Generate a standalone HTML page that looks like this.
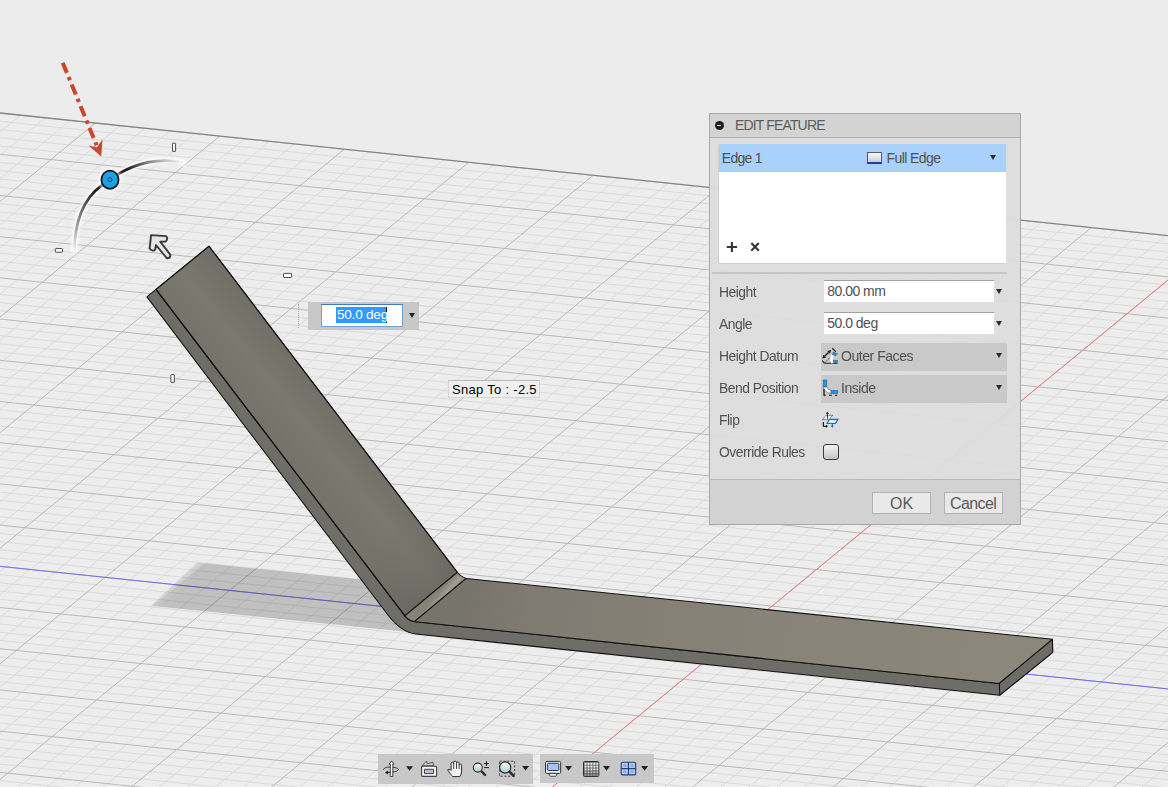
<!DOCTYPE html>
<html><head><meta charset="utf-8">
<style>
html,body{margin:0;padding:0;width:1168px;height:787px;overflow:hidden;background:#ececec;font-family:"Liberation Sans",sans-serif;}
#scene{position:absolute;left:0;top:0;}
.dlg{position:absolute;left:709px;top:113px;width:312px;height:412px;box-sizing:border-box;border:1px solid #a9a9a9;background:rgba(221,221,221,0.94);overflow:hidden;}
.dlg div{position:absolute;}
.t{line-height:20px;white-space:nowrap;font-size:13.5px;color:#505050;letter-spacing:-0.3px;}
.lb{font-size:14.3px;letter-spacing:-0.5px;transform:scaleX(0.97);transform-origin:0 0;}
.ttl{left:0;top:0;width:310px;height:23px;background:#d3d3d3;border-bottom:1px solid #b3b3b3;}
.list{left:9px;top:30px;width:287px;height:119px;background:#fff;box-shadow:-1px 1px 0 #cfcfcf;}
.hl{left:0;top:0;width:287px;height:28px;background:#aad0fc;}
.inp{left:114px;width:170px;height:21px;background:#fff;border-top:1px solid #a2a2a2;box-sizing:border-box;}
.sel{left:111px;width:186px;height:28px;background:#c9c9c9;}
.arr{width:0;height:0;border-left:3.7px solid transparent;border-right:3.7px solid transparent;border-top:5.3px solid #2a2a2a;}
.btn{top:378px;height:22px;background:#e9e9e9;border:1px solid #b3b3b3;box-sizing:border-box;}
.foot{left:0;top:365px;width:310px;height:47px;background:#d2d2d2;border-top:1px solid #b8b8b8;}
</style></head><body>
<svg id="scene" width="1168" height="787" viewBox="0 0 1168 787">
<defs>
<clipPath id="gclip"><polygon points="0,113 1168,235.6 1168,787 0,787"/></clipPath>
<filter id="blur3" x="-20%" y="-20%" width="140%" height="140%"><feGaussianBlur stdDeviation="3"/></filter>
<linearGradient id="bendg" x1="457" y1="572" x2="466" y2="580" gradientUnits="userSpaceOnUse">
<stop offset="0" stop-color="#858276"/><stop offset="0.5" stop-color="#a29e91"/><stop offset="1" stop-color="#8a867a"/></linearGradient>
<linearGradient id="shg" x1="169.5" y1="579" x2="179" y2="589.6" gradientUnits="userSpaceOnUse"><stop offset="0" stop-color="#000" stop-opacity="0"/><stop offset="1" stop-color="#000" stop-opacity="0.19"/></linearGradient>
<clipPath id="shclip"><polygon points="100,600.4 300,621 470,638.3 470,591 300,573.3 100,552.2"/></clipPath>
<linearGradient id="hfg" x1="466" y1="600" x2="1000" y2="656" gradientUnits="userSpaceOnUse"><stop offset="0" stop-color="#77746b"/><stop offset="0.12" stop-color="#7f7b72"/><stop offset="0.45" stop-color="#868277"/><stop offset="1" stop-color="#8b877b"/></linearGradient>
<linearGradient id="vfg" x1="431" y1="594" x2="383" y2="536" gradientUnits="userSpaceOnUse"><stop offset="0" stop-color="#000" stop-opacity="0.09"/><stop offset="0.5" stop-color="#000" stop-opacity="0.035"/><stop offset="1" stop-color="#000" stop-opacity="0"/></linearGradient>
<linearGradient id="vfg2" x1="156" y1="289.4" x2="209" y2="246.2" gradientUnits="userSpaceOnUse"><stop offset="0" stop-color="#76736b"/><stop offset="0.45" stop-color="#7b786f"/><stop offset="1" stop-color="#716e67"/></linearGradient>
</defs>
<g clip-path="url(#gclip)">
<rect x="0" y="0" width="1168" height="787" fill="#ededed"/>
<!-- shadow -->
<g transform="matrix(124.5 13.07 -44.38 36.55 727.6 642.7)" fill="none">
<path d="M-11.8 -11V7M-11.6 -11V7M-11.4 -11V7M-11.2 -11V7M-10.8 -11V7M-10.6 -11V7M-10.4 -11V7M-10.2 -11V7M-9.8 -11V7M-9.6 -11V7M-9.4 -11V7M-9.2 -11V7M-8.8 -11V7M-8.6 -11V7M-8.4 -11V7M-8.2 -11V7M-7.8 -11V7M-7.6 -11V7M-7.4 -11V7M-7.2 -11V7M-6.8 -11V7M-6.6 -11V7M-6.4 -11V7M-6.2 -11V7M-5.8 -11V7M-5.6 -11V7M-5.4 -11V7M-5.2 -11V7M-4.8 -11V7M-4.6 -11V7M-4.4 -11V7M-4.2 -11V7M-3.8 -11V7M-3.6 -11V7M-3.4 -11V7M-3.2 -11V7M-2.8 -11V7M-2.6 -11V7M-2.4 -11V7M-2.2 -11V7M-1.8 -11V7M-1.6 -11V7M-1.4 -11V7M-1.2 -11V7M-0.8 -11V7M-0.6 -11V7M-0.4 -11V7M-0.2 -11V7M0.2 -11V7M0.4 -11V7M0.6 -11V7M0.8 -11V7M1.2 -11V7M1.4 -11V7M1.6 -11V7M1.8 -11V7M2.2 -11V7M2.4 -11V7M2.6 -11V7M2.8 -11V7M3.2 -11V7M3.4 -11V7M3.6 -11V7M3.8 -11V7M4.2 -11V7M4.4 -11V7M4.6 -11V7M4.8 -11V7M5.2 -11V7M5.4 -11V7M5.6 -11V7M5.8 -11V7M-12 -10.8H6M-12 -10.6H6M-12 -10.4H6M-12 -10.2H6M-12 -9.8H6M-12 -9.6H6M-12 -9.4H6M-12 -9.2H6M-12 -8.8H6M-12 -8.6H6M-12 -8.4H6M-12 -8.2H6M-12 -7.8H6M-12 -7.6H6M-12 -7.4H6M-12 -7.2H6M-12 -6.8H6M-12 -6.6H6M-12 -6.4H6M-12 -6.2H6M-12 -5.8H6M-12 -5.6H6M-12 -5.4H6M-12 -5.2H6M-12 -4.8H6M-12 -4.6H6M-12 -4.4H6M-12 -4.2H6M-12 -3.8H6M-12 -3.6H6M-12 -3.4H6M-12 -3.2H6M-12 -2.8H6M-12 -2.6H6M-12 -2.4H6M-12 -2.2H6M-12 -1.8H6M-12 -1.6H6M-12 -1.4H6M-12 -1.2H6M-12 -0.8H6M-12 -0.6H6M-12 -0.4H6M-12 -0.2H6M-12 0.2H6M-12 0.4H6M-12 0.6H6M-12 0.8H6M-12 1.2H6M-12 1.4H6M-12 1.6H6M-12 1.8H6M-12 2.2H6M-12 2.4H6M-12 2.6H6M-12 2.8H6M-12 3.2H6M-12 3.4H6M-12 3.6H6M-12 3.8H6M-12 4.2H6M-12 4.4H6M-12 4.6H6M-12 4.8H6M-12 5.2H6M-12 5.4H6M-12 5.6H6M-12 5.8H6M-12 6.2H6M-12 6.4H6M-12 6.6H6M-12 6.8H6" stroke="#dbdbdb" stroke-width="1" vector-effect="non-scaling-stroke"/>
<path d="M-12 -11V7M-11 -11V7M-10 -11V7M-9 -11V7M-8 -11V7M-7 -11V7M-6 -11V7M-5 -11V7M-4 -11V7M-3 -11V7M-2 -11V7M-1 -11V7M0 -11V7M1 -11V7M2 -11V7M3 -11V7M4 -11V7M5 -11V7M6 -11V7M-12 -11H6M-12 -10H6M-12 -9H6M-12 -8H6M-12 -7H6M-12 -6H6M-12 -5H6M-12 -4H6M-12 -3H6M-12 -2H6M-12 -1H6M-12 0H6M-12 1H6M-12 2H6M-12 3H6M-12 4H6M-12 5H6M-12 6H6M-12 7H6" stroke="#b9b9b9" stroke-width="1" vector-effect="non-scaling-stroke"/>
<path d="M0 -11V7" stroke="#f07c7c" stroke-width="1" vector-effect="non-scaling-stroke"/>
<path d="M-12 0H6" stroke="#7070f0" stroke-width="1" vector-effect="non-scaling-stroke"/>
</g>
<polygon points="125,630 205,555 470,585 470,645" fill="url(#shg)" clip-path="url(#shclip)"/>
</g>
<line x1="0" y1="113" x2="1168" y2="235.6" stroke="#858585" stroke-width="1.3"/>
<!-- part -->
<g stroke="#111" stroke-width="1.05" stroke-linejoin="round">
<path d="M146.9 296.9L388 615Q401.2 632.4 416 634L999.8 695.2L1052.7 652.3L1052.4 639.3L999.3 683.5L415.4 621.8Q409.2 621.2 404.9 615.8L156 289.4Z" fill="#6e6d68"/>
<path d="M156 289.4L209 246.2L457.3 572.3L404.9 615.8Z" fill="url(#vfg2)"/>
<path d="M339.6 530L390.7 485L457.3 572.3L404.9 615.8Z" fill="url(#vfg)" stroke="none"/>
<path d="M156 289.4L209 246.2L457.3 572.3L404.9 615.8Z" fill="none"/>
<path d="M457.3 572.3Q461 577 466.2 578.4L414.7 621.4Q409.2 621.2 404.9 615.8Z" fill="url(#bendg)"/>
<path d="M466.2 578.4L1052.4 639.3L999.3 683.5L415.4 621.8L414.7 621.4Z" fill="url(#hfg)"/>
<path d="M1052.4 639.3L1052.7 652.3L999.8 695.2L999.3 683.5Z" fill="#6c6b66"/>
</g>
<!-- gizmo -->
<defs>
<filter id="glow" x="-30%" y="-30%" width="160%" height="160%"><feGaussianBlur stdDeviation="1.6"/></filter>
<linearGradient id="arcg" x1="74" y1="253" x2="186" y2="163" gradientUnits="userSpaceOnUse">
<stop offset="0" stop-color="#444" stop-opacity="0"/><stop offset="0.12" stop-color="#3a3a3a" stop-opacity="0.45"/><stop offset="0.38" stop-color="#1e1e1e" stop-opacity="1"/><stop offset="0.66" stop-color="#1e1e1e" stop-opacity="1"/><stop offset="0.86" stop-color="#444" stop-opacity="0.45"/><stop offset="1" stop-color="#555" stop-opacity="0"/></linearGradient>
</defs>
<path d="M74.5 253C74 222 84 198 101.2 185.8C117 173 140 160 166.8 160.6C175 161 182 162 186 163.6" stroke="#fff" stroke-width="6" fill="none" filter="url(#glow)" opacity="0.95"/>
<path d="M74.5 253C74 222 84 198 101.2 185.8C117 173 140 160 166.8 160.6C175 161 182 162 186 163.6" stroke="url(#arcg)" stroke-width="2.8" fill="none"/>
<ellipse cx="110" cy="179.7" rx="12" ry="12" fill="#fff" opacity="0.6" filter="url(#glow)"/>
<ellipse cx="110" cy="179.7" rx="8.6" ry="9.1" fill="#18a2e8" stroke="#151515" stroke-width="1.7"/>
<circle cx="110" cy="179.7" r="2" fill="none" stroke="#1a3550" stroke-width="0.9"/>
<g fill="#fff" stroke="#4a4a4a" stroke-width="1">
<rect x="172.5" y="143.2" width="3.1" height="8.2" rx="0.4"/>
<rect x="55.3" y="248.6" width="7.2" height="3.6" rx="0.6"/>
<rect x="283.6" y="273.4" width="8" height="4.1" rx="0.6"/>
<rect x="170.9" y="374.6" width="3.4" height="7.8" rx="0.4"/>
</g>
<path d="M151.1 235.1L166 236.1Q168.6 238.6 165.6 241.6L160.2 241.7L170.4 254.8Q170.6 258.1 167 258.4L156 245L155.2 249.5Q153 252.2 149.6 248.6Z" fill="#e6e6e8" stroke="#3a3a3a" stroke-width="1.9" stroke-linejoin="round"/>
<!-- red arrow -->
<path d="M62.7 62.7L96.6 145.2" stroke="#c9472e" stroke-width="4" stroke-dasharray="11 4.5 3.5 4.5" fill="none"/>
<path d="M101.2 156.4L88.6 145.6L97 147.3L102.6 139.6Z" fill="#c9472e"/>
</svg>
<div style="position:absolute;left:308px;top:302px;width:111px;height:27.6px;background:#c8c8c8;"></div>
<div style="position:absolute;left:297.8px;top:304px;width:0;height:24px;border-left:1.2px dotted #a8a8a8;"></div>
<div style="position:absolute;left:320.5px;top:304px;width:82px;height:22.6px;box-sizing:border-box;background:#fff;border:1px solid #6a9fd8;border-top-color:#3f78c0;"></div>
<div style="position:absolute;left:336.1px;top:307.1px;width:50.5px;height:15.5px;background:#3399ff;"></div>
<div style="position:absolute;left:386px;top:307px;width:1.2px;height:15.6px;background:#111;"></div>
<div style="position:absolute;left:337px;top:305px;line-height:20px;font-size:13.5px;color:#fff;white-space:nowrap;letter-spacing:-0.2px;">50.0 deg</div>
<div style="position:absolute;left:409.3px;top:312.8px;width:0;height:0;border-left:3.3px solid transparent;border-right:3.3px solid transparent;border-top:5.6px solid #222;"></div>
<div style="position:absolute;left:448.3px;top:380.2px;width:91.3px;height:18.3px;box-sizing:border-box;background:#efefef;border:1px solid #d4d4d4;border-top-color:#b9b9b9;"></div>
<div style="position:absolute;left:452px;top:379.8px;line-height:20px;font-size:13px;color:#000;white-space:nowrap;letter-spacing:0.3px;">Snap To : -2.5</div>
<div class="dlg">
<div class="ttl"></div>
<div style="left:4.5px;top:7px;width:9px;height:9px;border-radius:50%;background:#1e1e1e;"></div>
<div style="left:6.8px;top:11px;width:4.4px;height:1.2px;background:#f0f0f0;"></div>
<div class="t" style="left:25px;top:1px;font-size:14px;color:#5c5c5c;letter-spacing:-0.85px;">EDIT FEATURE</div>
<div class="list">
<div class="hl"></div>
<div class="t" style="left:2.8px;top:3.7px;font-size:14px;letter-spacing:-0.75px;">Edge 1</div>
<div style="left:147.8px;top:8px;width:15.5px;height:11.8px;box-sizing:border-box;border:1px solid #5a5a5a;border-bottom:2px solid #1a3ea8;background:linear-gradient(#fafafa,#c9cfd8);"></div>
<div class="t" style="left:167.6px;top:3.7px;font-size:14px;letter-spacing:-0.6px;">Full Edge</div>
<div class="arr" style="left:271.1px;top:10.6px;"></div>
<svg style="position:absolute;left:0;top:0" width="60" height="119"><path d="M7.8 103H18M12.9 98V108" stroke="#363636" stroke-width="2.1"/><path d="M32.3 99.1L39.8 106.7M39.8 99.1L32.3 106.7" stroke="#363636" stroke-width="2.1"/></svg>
</div>
<div style="left:2px;top:158px;width:295px;height:1.8px;background:#c6c6c6;"></div>
<div class="t lb" style="left:9.3px;top:167.94px;">Height</div>
<div class="inp" style="top:166.3px;height:21.8px;"></div>
<div class="t" style="left:117.2px;top:167.3px;font-size:14px;letter-spacing:-0.5px;">80.00 mm</div>
<div class="arr" style="left:286.1px;top:174.5px;"></div>
<div class="t lb" style="left:9.3px;top:200.04px;">Angle</div>
<div class="inp" style="top:198.3px;height:21.6px;"></div>
<div class="t" style="left:117.2px;top:199.1px;font-size:14px;letter-spacing:-0.5px;">50.0 deg</div>
<div class="arr" style="left:286.1px;top:206.5px;"></div>
<div class="t lb" style="left:9.3px;top:231.94px;">Height Datum</div>
<div class="sel" style="top:228.5px;"></div>
<div class="t lb" style="left:131px;top:231.90px;font-size:14.5px;">Outer Faces</div>
<div class="arr" style="left:285.6px;top:238.5px;"></div>
<div class="t lb" style="left:9.3px;top:264.04px;">Bend Position</div>
<div class="sel" style="top:260.8px;"></div>
<div class="t lb" style="left:131px;top:264.00px;font-size:14.5px;">Inside</div>
<div class="arr" style="left:285.6px;top:271px;"></div>
<div class="t lb" style="left:9.3px;top:296.04px;">Flip</div>
<svg style="position:absolute;left:112px;top:234px;overflow:visible" width="16" height="16" viewBox="0 0 16 16">
<path d="M2.7 14.7L10 7.7" stroke="#222" stroke-width="0.9" stroke-dasharray="1.3 0.9" fill="none"/>
<path d="M2.4 15.3H15.6" stroke="#333" stroke-width="1.1"/>
<path d="M0.4 12.6L2.4 15.3" stroke="#222" stroke-width="1.1"/>
<path d="M2.73 8.08L6.57 4.42" stroke="#1a1a1a" stroke-width="1.3"/>
<path d="M9.1 2L7.95 5.87L5.19 2.97Z M0.2 10.5L4.11 9.53L1.35 6.63Z" fill="#1a1a1a"/>
<path d="M10.2 0.2L13.9 3.8" stroke="#222" stroke-width="1.3"/>
<path d="M11.1 4.1L15.6 5.8L13.9 7.5L10.5 7.2Z" fill="#0b9bff" stroke="#4a4a4a" stroke-width="0.5"/>
<path d="M10.8 7.3Q8.2 10.5 10.8 15" stroke="#fff" stroke-width="2.6" fill="none"/>
<rect x="11.5" y="12.2" width="3.8" height="2.5" fill="#0b9bff" stroke="#4a4a4a" stroke-width="0.5"/>
</svg>
<svg style="position:absolute;left:112px;top:262px;overflow:visible" width="16" height="16" viewBox="0 0 16 16">
<rect x="1.2" y="4" width="3.6" height="7" fill="#0b9bff" stroke="#5a5a5a" stroke-width="0.6"/>
<path d="M1.2 11Q2.5 16.6 9.1 17.5V14.3Q5.4 13.8 4.8 11Z" fill="#fff" stroke="#5a5a5a" stroke-width="0.6"/>
<rect x="9.1" y="14.3" width="6.7" height="3.2" fill="#0b9bff" stroke="#5a5a5a" stroke-width="0.6"/>
<path d="M2 12.8V19.3H3.8M7 19.3H9.7M13.1 19.3H15.2" stroke="#000" stroke-width="1.1" fill="none"/>
</svg>
<svg style="position:absolute;left:112px;top:294px;overflow:visible" width="16" height="16" viewBox="0 0 16 16">
<path d="M0.3 11.6H6.7L10.9 7.3H4.3Z" fill="#fafafa" stroke="#333" stroke-width="0.9" stroke-dasharray="1.3 0.8"/>
<path d="M5.45 10.5V5" stroke="#333" stroke-width="1.1"/>
<path d="M5.45 3.6L3.9 6H7Z" fill="#333"/>
<path d="M5.1 15.5H13.4L16 11.3H7.3Z" fill="#c4e4f6" stroke="#1b6fd2" stroke-width="1.2"/>
<path d="M7.4 13.4H13.2" stroke="#fff" stroke-width="1"/>
<path d="M10.3 15.5V18.6" stroke="#1b6fd2" stroke-width="1.2"/>
<path d="M10.3 20L8.8 17.8H11.8Z" fill="#1b6fd2"/>
<path d="M1.3 14V18.2H4.6" stroke="#000" stroke-width="1.1" fill="none"/>
<path d="M6 18.2L4 16.7V19.7Z" fill="#000"/>
</svg>
<div class="t lb" style="left:9.3px;top:328.14px;">Override Rules</div>
<div style="left:112.5px;top:329.5px;width:16px;height:16px;box-sizing:border-box;border:1px solid #3c3c3c;border-radius:3px;background:linear-gradient(#f4f4f4,#c4c4c4);"></div>
<div class="foot"></div>
<div class="btn" style="left:161.5px;width:59.5px;"></div>
<div class="btn" style="left:233.5px;width:59.5px;"></div>
<div class="t" style="left:180px;top:379.6px;font-size:16px;color:#5a5a5a;letter-spacing:0;">OK</div>
<div class="t" style="left:240px;top:379.6px;font-size:16px;color:#5a5a5a;letter-spacing:-0.6px;">Cancel</div>
</div>
<div style="position:absolute;left:378.2px;top:754.1px;width:154.6px;height:29.5px;background:#c8c8c8;"></div>
<div style="position:absolute;left:539.6px;top:754.1px;width:114.1px;height:29.4px;background:#c8c8c8;"></div>
<svg style="position:absolute;left:0;top:0;" width="1168" height="787" viewBox="0 0 1168 787">
<defs>
<linearGradient id="lens" x1="0" y1="0" x2="0" y2="1"><stop offset="0" stop-color="#f4fbfb"/><stop offset="1" stop-color="#a9cfd4"/></linearGradient>
<linearGradient id="gridg" x1="0" y1="0" x2="0" y2="1"><stop offset="0" stop-color="#6e7278"/><stop offset="0.5" stop-color="#62666c"/><stop offset="1" stop-color="#4a4e54"/></linearGradient>
</defs>
<g id="tb" stroke-linejoin="round">
<!-- orbit -->
<path d="M383.2 769.8Q384.5 767 390 767M393 767.2Q398.8 768 398.6 769.6Q398 771.6 393 772" stroke="#2a2a2a" stroke-width="0.9" fill="none"/>
<path d="M390.3 776.5V764.2H389L391.55 760.9L394.1 764.2H392.8V776.5Z" fill="#fff" stroke="#333" stroke-width="0.9"/>
<path d="M387.8 772.4H390.3" stroke="#1a1a1a" stroke-width="1"/>
<path d="M385 772.4L388 770.4V774.4Z" fill="#1a1a1a"/>
<path d="M406.1 766.2H413L409.55 770.8Z" fill="#222"/>
<!-- look at -->
<path d="M421.9 765.8L426.5 761.2L427.3 763.7L432.9 762.3L433.7 765.8Z" fill="#cdd2d8" stroke="#444" stroke-width="0.9"/>
<rect x="421.6" y="766.2" width="15" height="10.2" rx="0.8" fill="#f6f6f6" stroke="#3e4248" stroke-width="1.1"/>
<rect x="424.4" y="769.3" width="9.2" height="4.3" fill="#b8bdc6" stroke="#3e4248" stroke-width="1"/>
<!-- pan hand -->
<g transform="translate(447.2 761)">
<path d="M0.4 8.9Q1.6 7.6 3.2 8.8L3.9 9.5V2.6Q3.9 1.2 5.2 1.2Q6.5 1.2 6.5 2.6V1.4Q6.5 0.1 7.9 0.1Q9.3 0.1 9.3 1.4V2.2Q9.3 1 10.6 1Q11.9 1 11.9 2.2V4.3Q11.9 3.1 13.1 3.1Q14.4 3.1 14.4 4.3V10.2Q14.4 13.4 12.6 15.6H5.6Q4.3 14.6 3 12.6Z" fill="#f4f4f6" stroke="#2e2e2e" stroke-width="1"/>
<path d="M6.5 2.6V8M9.3 2.2V7.8M11.9 4.3V8.2" stroke="#2e2e2e" stroke-width="0.9"/>
</g>
<!-- zoom +- -->
<circle cx="477.8" cy="767.6" r="4.5" fill="url(#lens)" stroke="#2e2e2e" stroke-width="1.1"/>
<path d="M481.8 771.6L485 774.8" stroke="#333" stroke-width="2.6" stroke-linecap="round"/>
<path d="M484 763.6H489M486.5 761.2V766M484 767.6H489" stroke="#1e1e1e" stroke-width="1"/>
<!-- zoom window -->
<rect x="499.6" y="761.2" width="15" height="15" fill="none" stroke="#333" stroke-width="0.9" stroke-dasharray="2.2 1.6"/>
<circle cx="505.2" cy="767.5" r="5.6" fill="url(#lens)" stroke="#2a2a2a" stroke-width="1.2"/>
<path d="M510 772.3L513.6 775.8" stroke="#333" stroke-width="2.6" stroke-linecap="round"/>
<path d="M522.1 766H529L525.55 770.6Z" fill="#222"/>
<!-- display -->
<rect x="545.5" y="761.4" width="15.2" height="12" rx="1.3" fill="#f0f0f0" stroke="#2e2e2e" stroke-width="1"/>
<rect x="547.4" y="763.3" width="11.4" height="7.2" rx="1" fill="#a6c4ea" stroke="#223a70" stroke-width="1"/>
<path d="M549.2 773.4Q549 776.2 550.6 776.2H555.4Q557 776.2 556.8 773.4Z" fill="#fafafa" stroke="#2e2e2e" stroke-width="0.9"/>
<path d="M565.1 766H572L568.55 770.7Z" fill="#222"/>
<!-- grid -->
<rect x="583.5" y="761.5" width="15.3" height="15" rx="1.2" fill="url(#gridg)" stroke="#2e2e2e" stroke-width="1"/>
<rect x="584.60" y="762.80" width="1.9" height="1.9" fill="#fff" fill-opacity="1"/><rect x="584.60" y="765.65" width="1.9" height="1.9" fill="#fff" fill-opacity="1"/><rect x="584.60" y="768.50" width="1.9" height="1.9" fill="#fff" fill-opacity="0.9"/><rect x="584.60" y="771.35" width="1.9" height="1.9" fill="#fff" fill-opacity="0.65"/><rect x="584.60" y="774.20" width="1.9" height="1.9" fill="#fff" fill-opacity="0.45"/><rect x="587.55" y="762.80" width="1.9" height="1.9" fill="#fff" fill-opacity="1"/><rect x="587.55" y="765.65" width="1.9" height="1.9" fill="#fff" fill-opacity="1"/><rect x="587.55" y="768.50" width="1.9" height="1.9" fill="#fff" fill-opacity="0.9"/><rect x="587.55" y="771.35" width="1.9" height="1.9" fill="#fff" fill-opacity="0.65"/><rect x="587.55" y="774.20" width="1.9" height="1.9" fill="#fff" fill-opacity="0.45"/><rect x="590.50" y="762.80" width="1.9" height="1.9" fill="#fff" fill-opacity="1"/><rect x="590.50" y="765.65" width="1.9" height="1.9" fill="#fff" fill-opacity="1"/><rect x="590.50" y="768.50" width="1.9" height="1.9" fill="#fff" fill-opacity="0.9"/><rect x="590.50" y="771.35" width="1.9" height="1.9" fill="#fff" fill-opacity="0.65"/><rect x="590.50" y="774.20" width="1.9" height="1.9" fill="#fff" fill-opacity="0.45"/><rect x="593.45" y="762.80" width="1.9" height="1.9" fill="#fff" fill-opacity="1"/><rect x="593.45" y="765.65" width="1.9" height="1.9" fill="#fff" fill-opacity="1"/><rect x="593.45" y="768.50" width="1.9" height="1.9" fill="#fff" fill-opacity="0.9"/><rect x="593.45" y="771.35" width="1.9" height="1.9" fill="#fff" fill-opacity="0.65"/><rect x="593.45" y="774.20" width="1.9" height="1.9" fill="#fff" fill-opacity="0.45"/><rect x="596.40" y="762.80" width="1.9" height="1.9" fill="#fff" fill-opacity="1"/><rect x="596.40" y="765.65" width="1.9" height="1.9" fill="#fff" fill-opacity="1"/><rect x="596.40" y="768.50" width="1.9" height="1.9" fill="#fff" fill-opacity="0.9"/><rect x="596.40" y="771.35" width="1.9" height="1.9" fill="#fff" fill-opacity="0.65"/><rect x="596.40" y="774.20" width="1.9" height="1.9" fill="#fff" fill-opacity="0.45"/>
<path d="M603 766H610L606.5 770.7Z" fill="#222"/>
<!-- viewports -->
<rect x="621.2" y="762.3" width="14.5" height="12.6" rx="1.3" fill="#adc8ec" stroke="#243f7a" stroke-width="1.1"/>
<path d="M628.45 762.3V774.9M621.2 768.6H635.7" stroke="#243f7a" stroke-width="1.1"/>
<rect x="623.4" y="764.6" width="3" height="2" fill="#88a8d4"/>
<rect x="630.5" y="764.6" width="3" height="2" fill="#88a8d4"/>
<rect x="623.4" y="770.6" width="3" height="2" fill="#88a8d4"/>
<rect x="630.5" y="770.6" width="3" height="2" fill="#88a8d4"/>
<path d="M641.1 766H648.1L644.6 770.7Z" fill="#222"/>
</g>
</svg>
</body></html>
